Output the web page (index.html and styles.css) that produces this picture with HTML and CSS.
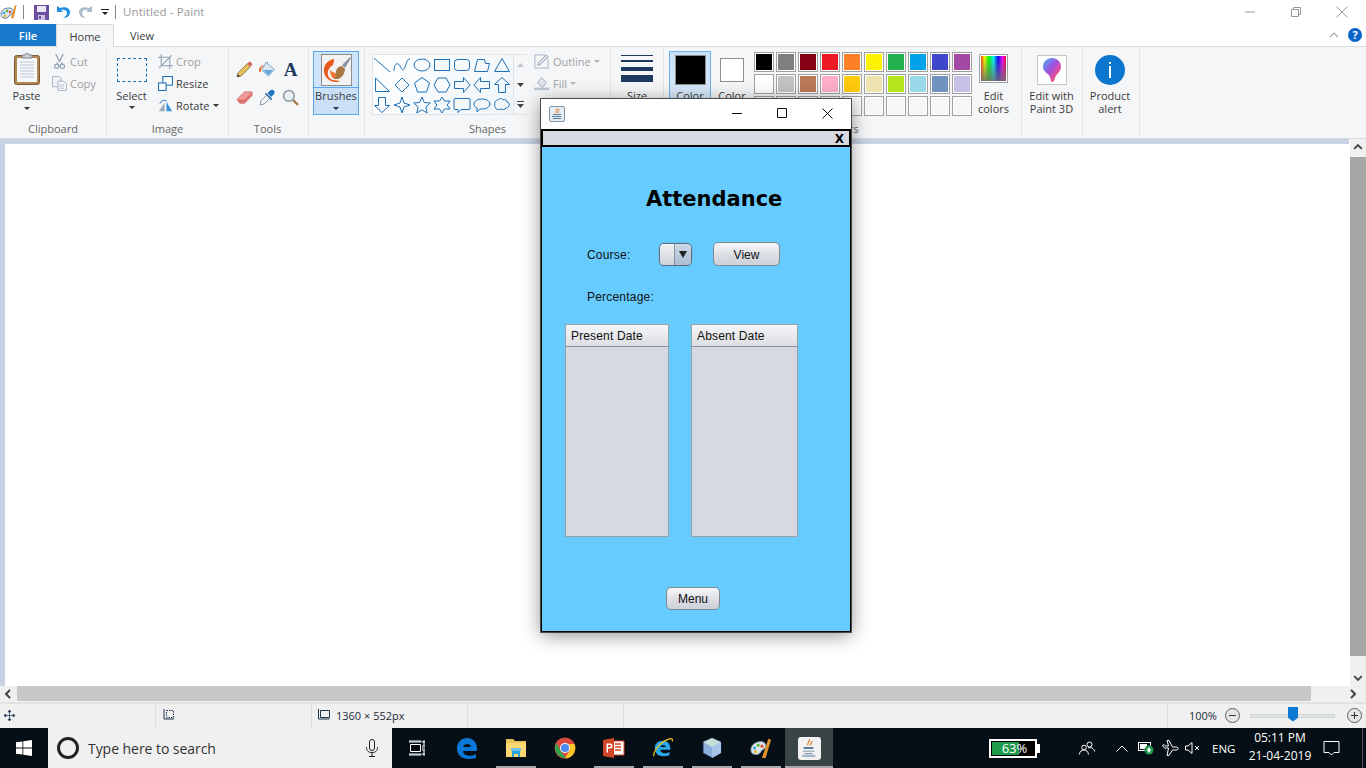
FILE: index.html
```html
<!DOCTYPE html>
<html lang="en">
<head>
<meta charset="utf-8">
<title>Untitled - Paint</title>
<link rel="stylesheet" href="styles.css">
</head>
<body>
<div class="app">
  <header class="titlebar">
    <svg class="qa-app" viewBox="0 0 17 18"><path d="M1 11c0-4 4-6 8-6 3 0 5 2 4 5-1 2-3 1-4 3-1 2-3 3-5 2-2 0-3-2-3-4z" fill="#d9e4ea" stroke="#5b7f98"/><circle cx="4" cy="10" r="1.3" fill="#3c9de0"/><circle cx="7" cy="8" r="1.3" fill="#5cb531"/><circle cx="10" cy="9" r="1.3" fill="#e0503a"/><circle cx="5" cy="13" r="1.3" fill="#e8b92c"/><path d="M11 15l4-13 1.500.5-3 13z" fill="#e2912f"/></svg>
    <span class="qa-sep qa-sep-a"></span>
    <svg class="qa-icon" viewBox="0 0 15 15"><path d="M0 0h15v15H0z" fill="#6a4fa3"/><path d="M3 1h9v6H3z" fill="#e9e6f3"/><path d="M4 10h7v5H4z" fill="#c9c3de"/><path d="M5 11h2v3H5z" fill="#6a4fa3"/></svg>
    <svg class="qa-icon" viewBox="0 0 15 15"><path d="M1 1v6h6L5 5c3-1 6 0 6 3 0 2-2 4-4 5 5 0 7-3 7-6 0-4-5-6-10-4z" fill="#1e8fe0"/></svg>
    <svg class="qa-icon" viewBox="0 0 15 15"><path d="M14 1v6H8l2-2C7 4 4 5 4 8c0 2 2 4 4 5-5 0-7-3-7-6 0-4 5-6 10-4z" fill="#a9bccb"/></svg>
    <svg class="qa-drop" viewBox="0 0 8 8"><path d="M0 1h8v1H0zM1 4h6L4 7z" fill="#222"/></svg>
    <span class="qa-sep qa-sep-b"></span>
    <span class="app-title">Untitled - Paint</span>
    <div class="caption">
      <svg viewBox="0 0 12 12"><path d="M1 6h10" stroke="#999" fill="none"/></svg>
      <svg viewBox="0 0 12 12"><path d="M1.500 3.500h7v7h-7zM3.500 3V1.500h7v7H9" stroke="#999" fill="none"/></svg>
      <svg viewBox="0 0 12 12"><path d="M.5.500l11 11M11.500.5l-11 11" stroke="#999" fill="none"/></svg>
    </div>
  </header>

  <nav class="tabs">
    <span class="tab tab-file">File</span>
    <span class="tab tab-home">Home</span>
    <span class="tab tab-view">View</span>
    <div class="tabs-right">
      <svg class="collapse" viewBox="0 0 10 6"><path d="M1 5l4-4 4 4" stroke="#aaa" fill="none" stroke-width="1.200"/></svg>
      <span class="help">?</span>
    </div>
  </nav>

  <section class="ribbon">
    <div class="group g-clip">
      <div class="group-body">
        <div class="big big-paste">
          <svg class="paste-icon" viewBox="0 0 26 32"><rect x=".5" y="2.500" width="25" height="29" rx="2" fill="#b08653" stroke="#7a5a34"/><rect x="3" y="5" width="20" height="24" fill="#f5f7fa"/><path d="M6 9h14M6 12h14M6 15h14M6 18h14M6 21h14M6 24h14" stroke="#b9c6d6"/><path d="M8 5V2h3l1-2h2l1 2h3v3z" fill="#c9ced4" stroke="#7c8288"/></svg>
          <span class="big-label">Paste</span>
          <span class="tri tri-low"></span>
        </div>
        <div class="small-col">
          <div class="small off"><svg viewBox="0 0 14 16"><path d="M3 0l4 8 4-8M5 9l-1 2M9 9l1 2" stroke="#8e9fb3" fill="none" stroke-width="1.300"/><circle cx="4" cy="13" r="2.300" fill="none" stroke="#8e9fb3" stroke-width="1.300"/><circle cx="10" cy="13" r="2.300" fill="none" stroke="#8e9fb3" stroke-width="1.300"/></svg><span>Cut</span></div>
          <div class="small off"><svg viewBox="0 0 16 16"><path d="M.5.500h7l2 2v9H.5z" fill="#eef1f5" stroke="#a4b1c2"/><path d="M6.500 5.500h6l3 3v7h-9z" fill="#f6f7f9" stroke="#a4b1c2"/><path d="M8 9h5M8 11h5M8 13h5" stroke="#bcc6d2"/></svg><span>Copy</span></div>
        </div>
      </div>
      <div class="group-label">Clipboard</div>
    </div>

    <div class="group g-image">
      <div class="group-body">
        <div class="big big-select">
          <span class="select-icon"></span>
          <span class="big-label">Select</span>
          <span class="tri"></span>
        </div>
        <div class="small-col">
          <div class="small off"><svg viewBox="0 0 14 14"><path d="M3 0v11h11M0 3h11v11M1 13L13 1" stroke="#8e9fb3" fill="none"/></svg><span>Crop</span></div>
          <div class="small"><svg viewBox="0 0 14 14"><rect x="4.500" y=".5" width="9" height="8" fill="#fff" stroke="#1f6fb5"/><rect x=".5" y="6.500" width="7" height="7" fill="#fff" stroke="#1f6fb5"/></svg><span>Resize</span></div>
          <div class="small"><svg viewBox="0 0 16 14"><path d="M1 13L7 4v9z" fill="#9fa9b5"/><path d="M9 13V3l6 10z" fill="#3a93d8"/><path d="M2 5a5 5 0 0 1 7-3" stroke="#1f6fb5" fill="none"/></svg><span>Rotate</span><span class="tri tri-inline"></span></div>
        </div>
      </div>
      <div class="group-label">Image</div>
    </div>

    <div class="group g-tools">
      <div class="group-body tools-grid">
        <svg viewBox="0 0 16 16"><path d="M1 15l1-4 8.500-8.500 3 3L5 14z" fill="#e6c25a" stroke="#6f6238" stroke-width=".7"/><path d="M10.500 2.500l1.500-1.500c.7-.5 1.200-.5 1.700 0l1.300 1.300c.5.500.5 1 0 1.700l-1.500 1.500z" fill="#d9665c"/><path d="M1 15l.6-2.600 2 2z" fill="#333"/></svg>
        <svg viewBox="0 0 18 16"><path d="M7 2V.5h2V2l7.500 6L10 15 3 8.500z" fill="#dbe9f4" stroke="#5b8fb8" stroke-width=".8"/><path d="M4.500 8.500h10L10 14z" fill="#5fa6dd"/><path d="M0 9c0-3 2-5 6-5.500L3 6c-1 1-1 3-1 5-1 0-2-1-2-2z" fill="#e8621e"/></svg>
        <span class="tool-a">A</span>
        <svg viewBox="0 0 18 14"><path d="M1 9l8-8h8v4l-8 8H4z" fill="#f09a9a" stroke="#bd6c6c" stroke-width=".7"/><path d="M9 9l8-8v4l-8 8zM1 9h8v4H4z" fill="#dc7373"/></svg>
        <svg viewBox="0 0 16 16"><path d="M1 15l1-4 5.500-5.500 3 3L5 14z" fill="#f4f6f8" stroke="#7c8a96" stroke-width=".8"/><path d="M6.500 3.500l6 6-1 1-6-6z" fill="#2a6fae"/><path d="M8 4l2.500-2.500c1-1 2.500-1 3.500 0s1 2.500 0 3.500L11.500 7.500z" fill="#1f74c0"/></svg>
        <svg viewBox="0 0 16 16"><circle cx="6.500" cy="6.500" r="5" fill="#e8f1f8" stroke="#8a959e" stroke-width="1.400"/><path d="M10.500 10.500l4.500 4.500" stroke="#a5794a" stroke-width="2.200"/></svg>
      </div>
      <div class="group-label">Tools</div>
    </div>

    <div class="group g-brush">
      <div class="brush-btn">
        <div class="brush-top">
          <svg viewBox="0 0 31 32"><rect x=".5" y=".5" width="30" height="31" fill="#f2f2f2" stroke="#8d8d8d"/><path d="M13 5C7 6 2 11 3 18c1 6 6 10 12 10 2 0 3 0 4-1l-7-1c-4-1-6-5-5-9 1-3 3-5 5-6 0-1 1-2 1-6z" fill="#e8591c"/><path d="M9 16c2 2 4 3 7 3l-1 6c-3 0-6-3-6-9z" fill="#f07a35"/><path d="M15 18c0-3 3-6 6-6l3 3c0 4-3 9-7 10-2 0-4 0-5-1 3 0 3-3 3-6z" fill="#a8773f"/><path d="M21 11L29 3l1 1-6 10z" fill="#8a97a5"/></svg>
        </div>
        <span class="big-label">Brushes</span>
        <span class="tri"></span>
      </div>
    </div>

    <div class="group g-shapes">
      <div class="group-body shapes-body">
        <div class="gallery">
          <div class="shape-grid">
            <svg viewBox="0 0 18 18"><path d="M1 2l16 14"/></svg>
            <svg viewBox="0 0 18 18"><path d="M1 15c0-8 4-9 6-5s3 6 5 1 2-8 5-8"/></svg>
            <svg viewBox="0 0 18 18"><ellipse cx="9" cy="9" rx="8" ry="6"/></svg>
            <svg viewBox="0 0 18 18"><rect x="1.500" y="3.500" width="15" height="11"/></svg>
            <svg viewBox="0 0 18 18"><rect x="1.500" y="3.500" width="15" height="11" rx="3"/></svg>
            <svg viewBox="0 0 18 18"><path d="M1.500 15.500l3-12h7l1 4h4l-2 8z"/></svg>
            <svg viewBox="0 0 18 18"><path d="M9 2.500l7.500 13h-15z"/></svg>
            <svg viewBox="0 0 18 18"><path d="M2.500 2v13.500h14z"/></svg>
            <svg viewBox="0 0 18 18"><path d="M9 2l7 7-7 7-7-7z"/></svg>
            <svg viewBox="0 0 18 18"><path d="M9 1.500l7.500 5.500-3 9h-9l-3-9z"/></svg>
            <svg viewBox="0 0 18 18"><path d="M5 2h8l4 7-4 7H5L1 9z"/></svg>
            <svg viewBox="0 0 18 18"><path d="M1.500 5.500h9v-4L17 9l-6.500 7.500v-4h-9z"/></svg>
            <svg viewBox="0 0 18 18"><path d="M16.500 5.500h-9v-4L1 9l6.500 7.500v-4h9z"/></svg>
            <svg viewBox="0 0 18 18"><path d="M5.500 16.500v-8h-4L9 1.500l7.500 7h-4v8z"/></svg>
            <svg viewBox="0 0 18 18"><path d="M5.500 1.500v8h-4L9 16.500l7.500-7h-4v-8z"/></svg>
            <svg viewBox="0 0 18 18"><path d="M9 1l2 6 6 2-6 2-2 6-2-6-6-2 6-2z"/></svg>
            <svg viewBox="0 0 18 18"><path d="M9 1l2.300 5.500 6 .5-4.500 4 1.400 6L9 13.800 3.800 17l1.400-6L.7 7l6-.5z"/></svg>
            <svg viewBox="0 0 18 18"><path d="M9 1l2.500 4H17l-2.800 4 2.800 4h-5.500L9 17l-2.500-4H1l2.800-4L1 5h5.500z"/></svg>
            <svg viewBox="0 0 18 18"><path d="M2 2.500h14a1 1 0 0 1 1 1v9a1 1 0 0 1-1 1H8l-3 3v-3H2a1 1 0 0 1-1-1v-9a1 1 0 0 1 1-1z"/></svg>
            <svg viewBox="0 0 18 18"><path d="M1 8c0-3 4-5 8-5s8 2 8 5-4 5-8 5H7l-3 3v-4C2 11 1 10 1 8z"/></svg>
            <svg viewBox="0 0 18 18"><path d="M2 8c-1-2 1-4 3-4 1-2 4-2 5 0 2-1 4 0 4 2 2 0 3 3 2 4-1 2-2 2-3 2-1 2-4 2-5 1-2 1-5 1-5-1-1 0-2-2-1-4z"/></svg>
          </div>
          <div class="gallery-scroll">
            <svg viewBox="0 0 13 20"><path d="M3 12l3.500-4 3.500 4z" fill="#c3c8ce"/></svg>
            <svg viewBox="0 0 13 20"><path d="M3 8l3.500 4 3.500-4z" fill="#444"/></svg>
            <svg viewBox="0 0 13 20"><path d="M3 6h7v1H3zM3 9l3.500 4 3.500-4z" fill="#444"/></svg>
          </div>
        </div>
        <div class="small-col small-col-shape">
          <div class="small off"><svg viewBox="0 0 16 16"><path d="M1 1h11M1 1v14h14V5" stroke="#a4b1c2" fill="none"/><path d="M4 12l1-3 8-8 2 2-8 8z" fill="#dfe5ec" stroke="#8e9fb3"/></svg><span>Outline</span><span class="tri tri-inline tri-off"></span></div>
          <div class="small off"><svg viewBox="0 0 18 16"><path d="M9 1l6 6-5 6-6-6z" fill="#dfe5ec" stroke="#8e9fb3"/><path d="M0 13h18v3H0z" fill="#b9c4d1"/></svg><span>Fill</span><span class="tri tri-inline tri-off"></span></div>
        </div>
      </div>
      <div class="group-label">Shapes</div>
    </div>

    <div class="group g-size">
      <div class="size-icon"><i class="l1"></i><i class="l2"></i><i class="l3"></i><i class="l4"></i></div>
      <span class="big-label">Size</span>
    </div>

    <div class="group g-colors">
      <div class="group-body colors-body">
        <div class="color-btn active">
          <span class="chip chip-1"></span>
          <span class="big-label">Color<br>1</span>
        </div>
        <div class="color-btn">
          <span class="chip chip-2"></span>
          <span class="big-label">Color<br>2</span>
        </div>
        <div class="palette">
          <span class="sw s01"></span><span class="sw s02"></span><span class="sw s03"></span><span class="sw s04"></span><span class="sw s05"></span><span class="sw s06"></span><span class="sw s07"></span><span class="sw s08"></span><span class="sw s09"></span><span class="sw s10"></span>
          <span class="sw s11"></span><span class="sw s12"></span><span class="sw s13"></span><span class="sw s14"></span><span class="sw s15"></span><span class="sw s16"></span><span class="sw s17"></span><span class="sw s18"></span><span class="sw s19"></span><span class="sw s20"></span>
          <span class="sw"></span><span class="sw"></span><span class="sw"></span><span class="sw"></span><span class="sw"></span><span class="sw"></span><span class="sw"></span><span class="sw"></span><span class="sw"></span><span class="sw"></span>
        </div>
        <div class="edit-col">
          <span class="rainbow"></span>
          <span class="big-label">Edit<br>colors</span>
        </div>
      </div>
      <div class="group-label">Colors</div>
    </div>

    <div class="group g-p3d">
      <span class="p3d-box"><svg viewBox="0 0 20 26"><defs><linearGradient id="p3" x1="0" y1="0" x2="1" y2="1"><stop offset="0" stop-color="#3fb6f2"/><stop offset=".45" stop-color="#a24fe0"/><stop offset=".75" stop-color="#f0508a"/><stop offset="1" stop-color="#f7a11a"/></linearGradient></defs><path d="M10 1c5 0 9 3.500 9 9 0 5-5 7-6 11-.5 3-2 4-3 4-1.500 0-1-4-3-7-2-2-6-4-6-8C1 4.500 5 1 10 1z" fill="url(#p3)"/></svg></span>
      <span class="big-label">Edit with<br>Paint 3D</span>
    </div>

    <div class="group g-alert">
      <span class="alert-circle"><i class="alert-dot"></i><i class="alert-bar"></i></span>
      <span class="big-label">Product<br>alert</span>
    </div>
  </section>

  <main class="workspace">
    <div class="canvas-wrap">
      <div class="canvas-area"><div class="canvas"></div></div>
      <div class="vscroll">
        <svg class="arrow" viewBox="0 0 17 16"><path d="M4.500 10l4-4 4 4" stroke="#444" stroke-width="2" fill="none"/></svg>
        <div class="vthumb"></div>
        <svg class="arrow" viewBox="0 0 17 16"><path d="M4.500 6l4 4 4-4" stroke="#444" stroke-width="2" fill="none"/></svg>
      </div>
    </div>
    <div class="hscroll">
      <svg class="arrow-h" viewBox="0 0 17 16"><path d="M10 4l-4 4 4 4" stroke="#444" stroke-width="2" fill="none"/></svg>
      <div class="hthumb"></div>
      <svg class="arrow-h" viewBox="0 0 17 16"><path d="M7 4l4 4-4 4" stroke="#444" stroke-width="2" fill="none"/></svg>
    </div>
  </main>

  <footer class="status">
    <div class="st st1"><svg viewBox="0 0 12 12"><path d="M6 0v12M0 6h12M6 0L4.500 2h3zM6 12l-1.500-2h3zM0 6l2-1.500v3zM12 6l-2-1.500v3z" stroke="#1d3550" fill="#1d3550" stroke-width=".8"/></svg></div>
    <div class="st st2"><svg viewBox="0 0 14 13"><path d="M3 0v10h10" stroke="#1d3550" fill="none"/><path d="M5.500 1.500h7v7h-7z" stroke="#1d3550" fill="none" stroke-dasharray="1.500 1"/></svg></div>
    <div class="st st3"><svg viewBox="0 0 14 13"><path d="M1.500 0v10h11" stroke="#1d3550" fill="none"/><path d="M3.500 1.500h9v7h-9z" stroke="#1d3550" fill="none"/></svg><span>1360 × 552px</span></div>
    <div class="st st4"></div>
    <div class="st st5"></div>
    <div class="st st6">
      <span class="zoom-val">100%</span>
      <span class="zoom-btn"><i></i></span>
      <span class="slider"><i class="thumb"></i></span>
      <span class="zoom-btn plus"><i></i></span>
    </div>
  </footer>

  <footer class="taskbar">
    <div class="start"><svg viewBox="0 0 16 16"><path d="M0 2.300l6.500-.9v6.200H0zM7.300 1.300L16 0v7.600H7.300zM0 8.400h6.500v6.200L0 13.700zM7.300 8.400H16V16l-8.700-1.200z" fill="#fff"/></svg></div>
    <div class="search">
      <span class="cortana"></span>
      <span class="search-text">Type here to search</span>
      <svg class="mic" viewBox="0 0 12 18"><rect x="3.500" y=".5" width="5" height="11" rx="2.500" fill="none" stroke="#222"/><path d="M.5 8c0 4 2 5.500 5.500 5.500S11.500 12 11.500 8M6 13.500V17M3 17.500h6" fill="none" stroke="#222"/></svg>
    </div>
    <div class="apps">
      <span class="app-slot slot-task"><svg viewBox="0 0 16 16"><path d="M0 1h12v1H0zM0 14h12v1H0zM1.500 4.500h10v7h-10zM14 1h2v2h-2zM14 5h2v6h-2zM14 13h2v2h-2z" fill="none" stroke="#fff"/></svg></span>
      <span class="app-slot"><svg viewBox="0 0 22 22"><path d="M1 11C1 5 6 1 11 1c6 0 10 4 10 11v2H7c0 5 8 6 13 3v4c-7 2-14 1-17-3-1-2-2-4-2-7zm6-1h8c0-4-7-4-8 0z" fill="#0a78d7"/></svg></span>
      <span class="app-slot on"><svg viewBox="0 0 22 20"><path d="M1 1h7l2 2h11v3H1z" fill="#e8c457"/><path d="M1 5h20v14H1z" fill="#fbd872"/><path d="M7 13h8v6h-2v-3H9v3H7z" fill="#2ba3e0"/><path d="M6 10h10v3H6z" fill="#6fc2ec"/></svg></span>
      <span class="app-slot"><svg viewBox="0 0 22 22"><circle cx="11" cy="11" r="10.500" fill="#dd4b3e"/><path d="M2 6l6 10 4 5a10.500 10.500 0 0 1-10-15z" fill="#2fa34f"/><path d="M20.500 7A10.500 10.500 0 0 1 11 21.500L16 13l-1-6z" fill="#f9c923"/><circle cx="11" cy="11" r="5" fill="#fff"/><circle cx="11" cy="11" r="4" fill="#4a8af0"/></svg></span>
      <span class="app-slot on"><svg viewBox="0 0 22 20"><path d="M9 3h12v14H9z" fill="#fff" stroke="#d24726"/><path d="M12 6h6M12 9h6M12 12h6" stroke="#d24726" stroke-width="1.400"/><path d="M0 2l11-2v20L0 18z" fill="#d24726"/><path d="M3.500 5.500h3.500a2.500 2.500 0 0 1 0 5H5v4H3.500zM5 7v2h2a1 1 0 0 0 0-2z" fill="#fff"/></svg></span>
      <span class="app-slot on"><svg viewBox="0 0 24 24"><path d="M3 12c0-5 4-8 9-8 5 0 8 3 8 9v1H9c0 4 6 5 10 2v4c-6 2-12 1-14-2-1-2-2-4-2-6zm6-1h6c0-3-5-3-6 0z" fill="#2aa8e8"/><path d="M2 21C1 16 9 5 19 2c3-1 4 1 3 3" stroke="#f0c419" fill="none" stroke-width="1.300"/></svg></span>
      <span class="app-slot on"><svg viewBox="0 0 22 22"><path d="M11 1l9 4v11l-9 5-9-5V5z" fill="#8db1dc" stroke="#1f2a55"/><path d="M11 1l9 4-9 5-9-5z" fill="#c7ded8"/><path d="M11 10l9-5v11l-9 5z" fill="#a8c4e8"/></svg></span>
      <span class="app-slot on"><svg viewBox="0 0 24 24"><path d="M1 14c0-6 6-9 11-9 4 0 6 3 5 6-1 3-4 2-5 5-1 2-4 4-7 3-3 0-4-3-4-5z" fill="#dbe6ec" stroke="#6f8fa5"/><circle cx="5" cy="12" r="1.700" fill="#3c9de0"/><circle cx="9" cy="9" r="1.700" fill="#5cb531"/><circle cx="13" cy="10" r="1.700" fill="#e0503a"/><circle cx="6" cy="16" r="1.700" fill="#e8b92c"/><path d="M13 23L20 2l3 1-6 20z" fill="#e2912f"/></svg></span>
      <span class="app-slot active on"><span class="java-tile"><svg viewBox="0 0 18 20"><path d="M9 0c2 3-3 4-1 7M12 2c1 2-2 3-1 5" stroke="#e2761b" fill="none" stroke-width="1.300"/><path d="M3 9h11v2H3zM2 13h13v1H2zM4 16h9v1H4zM1 18.500h15v1H1z" fill="#5b7f9e"/></svg></span></span>
    </div>
    <div class="tray">
      <div class="battery"><span class="bat-fill"></span><span class="bat-text">63%</span></div>
      <svg class="t-people" viewBox="0 0 16 14"><circle cx="10.500" cy="3.500" r="2.500" fill="none" stroke="#fff"/><circle cx="5" cy="6.500" r="2.300" fill="none" stroke="#fff"/><path d="M.5 13.500c0-3 2-4.500 4.500-4.500s4 1.500 4.500 4.500M9 7c3-1 6 0 6.500 3.500" fill="none" stroke="#fff"/></svg>
      <svg class="t-chev" viewBox="0 0 12 7"><path d="M.5 6.500L6 1l5.500 5.500" fill="none" stroke="#fff"/></svg>
      <svg class="t-power" viewBox="0 0 16 14"><rect x=".5" y="1.500" width="12" height="8" fill="none" stroke="#fff"/><path d="M2 3h7v5H2z" fill="#fff"/><circle cx="11" cy="9" r="4.500" fill="#1e9a4a"/><path d="M11 6l2 3-2 3-2-3z" fill="#fff"/></svg>
      <svg class="t-plane" viewBox="0 0 17 16"><path d="M.5 5.500l2 2.500h4L5 15.500h2L10.500 10H14c3 0 3-3 0-3h-3.500L7 .5H5L6.500 6h-3L2 4.500z" fill="none" stroke="#fff"/></svg>
      <svg class="t-vol" viewBox="0 0 15 12"><path d="M.5 4h2.500L7 .5v11L3 8H.5z" fill="none" stroke="#fff"/><path d="M10 4l4 4M14 4l-4 4" stroke="#fff"/></svg>
      <span class="t-lang">ENG</span>
      <div class="clock"><span>05:11 PM</span><span>21-04-2019</span></div>
      <svg class="t-notif" viewBox="0 0 16 15"><path d="M.5.500h15v11h-5L8 14l-2.500-2.500h-5z" fill="none" stroke="#fff"/></svg>
      <span class="t-edge"></span>
    </div>
  </footer>

  <div class="jwin">
    <div class="jtitle">
      <span class="jicon"><svg viewBox="0 0 14 14"><path d="M7 1c1 2-2 2.500-1 5M9 2c.5 1.500-1.500 2-1 4" stroke="#e2761b" fill="none"/><path d="M3 7h8v1H3zM2 9h9v1H2zM3 11h8v1H3z" fill="#5b7f9e"/></svg></span>
      <div class="jcaption">
        <svg viewBox="0 0 11 11"><path d="M0 5.500h10" stroke="#111" fill="none"/></svg>
        <svg viewBox="0 0 11 11"><path d="M.5.500h9v9h-9z" stroke="#111" fill="none"/></svg>
        <svg viewBox="0 0 11 11"><path d="M.5.500l10 10M10.500.5l-10 10" stroke="#111" fill="none"/></svg>
      </div>
    </div>
    <div class="jframe">
      <div class="jbar"><span class="jx">X</span></div>
      <div class="jcontent">
        <h1 class="jhead">Attendance</h1>
        <div class="jrow">
          <span class="jlabel jlabel-course">Course:</span>
          <span class="combo"><i class="combo-field"></i><i class="combo-arrow"></i></span>
          <span class="jbtn jbtn-view">View</span>
        </div>
        <div class="jlabel jlabel-pct">Percentage:</div>
        <div class="jtables">
          <div class="jtable jt1"><div class="jth">Present Date</div></div>
          <div class="jtable jt2"><div class="jth">Absent Date</div></div>
        </div>
        <div class="jbtn jbtn-menu">Menu</div>
      </div>
    </div>
  </div>
</div>
</body>
</html>
```
FILE: styles.css
```css
* { box-sizing: border-box; }
html, body { margin: 0; padding: 0; }
body { width: 1366px; height: 768px; overflow: hidden; font-family: "Open Sans", "Noto Sans", sans-serif; font-size: 11px; color: #3c3c3c; }
svg { display: block; flex: none; }
i { display: block; font-style: normal; }

.app { position: relative; width: 1366px; height: 768px; display: flex; flex-direction: column; background: #fff; }

/* title bar */
.titlebar { height: 24px; display: flex; align-items: center; background: #fff; flex: none; }
.qa-app { width: 17px; height: 18px; }
.qa-sep { width: 1px; height: 14px; background: #888; }
.qa-sep-a { margin: 0 10px 0 6px; }
.qa-sep-b { margin: 0 7px 0 6px; }
.qa-icon { width: 15px; height: 15px; margin-right: 7px; }
.qa-drop { width: 8px; height: 8px; margin-left: 1px; }
.app-title { font-size: 11.500px; line-height: 14px; margin-top: -1px; color: #9a9a9a; letter-spacing: .1px; }
.caption { margin-left: auto; display: flex; margin-right: 18px; gap: 34px; }
.caption svg { width: 12px; height: 12px; }

/* tabs */
.tabs { height: 23px; display: flex; align-items: stretch; background: #fff; border-bottom: 1px solid #dadbdc; flex: none; }
.tab { display: flex; align-items: center; justify-content: center; font-size: 11px; color: #3b3b3b; }
.tab-file { width: 56px; background: #1979ca; color: #fff; font-weight: 600; }
.tab-home { width: 58px; background: #f5f6f7; border: 1px solid #dadbdc; border-bottom: 0; margin-bottom: -1px; }
.tab-view { width: 56px; }
.tabs-right { margin-left: auto; display: flex; align-items: center; gap: 9px; padding-right: 4px; }
.collapse { width: 10px; height: 6px; }
.help { width: 14px; height: 14px; border-radius: 50%; background: #0a63c9; color: #fff; font-weight: 700; font-size: 11px; line-height: 14px; text-align: center; }

/* ribbon */
.ribbon { height: 92px; background: #f5f6f7; border-bottom: 1px solid #dadbdc; display: flex; align-items: stretch; padding-top: 2px; padding-bottom: 2px; flex: none; }
.group { position: relative; display: flex; flex-direction: column; border-right: 1px solid #e2e3e5; flex: none; }
.group-body { display: flex; height: 72px; }
.group-label { text-align: center; font-size: 11px; line-height: 14px; color: #666; margin-top: 1px; }
.big { display: flex; flex-direction: column; align-items: center; }
.big-label { display: block; font-size: 11px; line-height: 13px; color: #3c3c3c; text-align: center; }
.tri { display: block; width: 0; height: 0; border-left: 3px solid transparent; border-right: 3px solid transparent; border-top: 3px solid #333; margin-top: 4px; }
.tri-low { margin-top: 5px; }
.tri-inline { margin: 0 0 0 3px; }
.tri-off { border-top-color: #b4b4b4; }

.g-clip { width: 107px; }
.big-paste { width: 53px; }
.paste-icon { width: 26px; height: 32px; margin: 4px 0 4px; }
.small-col { display: flex; flex-direction: column; margin-top: 1px; }
.g-clip .small-col { margin-left: -1px; }
.small { height: 22px; display: flex; align-items: center; color: #3c3c3c; font-size: 11px; }
.small svg { width: 15px; height: 15px; margin-right: 3px; }
.small.off { color: #a0a0a0; }

.g-image { width: 122px; }
.big-select { width: 49px; }
.select-icon { display: block; width: 30px; height: 24px; border: 1px dashed #1f6fb5; margin: 9px 0 7px 0; }
.g-image .small-col { margin-left: 2px; }

.g-tools { width: 80px; padding-right: 2px; }
.tools-grid { display: grid; grid-template-columns: repeat(3, 23px); grid-auto-rows: 28px; align-content: start; padding: 6px 0 0 4px; align-items: center; justify-items: center; }
.tools-grid svg { width: 17px; height: 17px; }
.tool-a { font-family: "Liberation Serif", serif; font-weight: 700; font-size: 19px; line-height: 17px; color: #1d3a5f; }

.g-brush { width: 56px; padding: 0 5px 0 4px; }
.brush-btn { width: 46px; height: 64px; margin-top: 2px; background: #c9e0f7; border: 1px solid #5aa5e8; display: flex; flex-direction: column; align-items: center; }
.brush-top { width: 44px; height: 36px; background: #cfe4f9; border-bottom: 1px solid #5aa5e8; display: flex; justify-content: center; align-items: center; margin-bottom: 1px; }
.brush-top svg { width: 31px; height: 32px; }
.brush-btn .tri { margin-top: 5px; }

.g-shapes { width: 246px; }
.shapes-body { padding-left: 7px; }
.gallery { width: 155px; height: 61px; margin-top: 5px; display: flex; border: 1px solid #e2e3e5; background: #fff; }
.shape-grid { width: 140px; display: grid; grid-template-columns: repeat(7, 20px); grid-auto-rows: 20px; background: linear-gradient(135deg, #fff, #eef5fa); }
.shape-grid svg { width: 18px; height: 18px; margin: 1px 0 0 0; fill: none; stroke: #1f6fb5; stroke-width: 1; }
.gallery-scroll { flex: 1; background: #f5f6f7; border-left: 1px solid #e2e3e5; }
.gallery-scroll svg { width: 13px; height: 20px; }
.small-col-shape { margin-left: 7px; }
.small-col-shape .small svg { margin-right: 4px; }
.g-size { width: 53px; align-items: center; }
.size-icon { width: 32px; height: 28px; margin-top: 6px; margin-bottom: 5px; display: flex; flex-direction: column; }
.size-icon i { background: #1f3a5f; }
.l1 { height: 1px; }
.l2 { height: 2px; margin-top: 4px; }
.l3 { height: 4px; margin-top: 5px; }
.l4 { height: 7px; margin-top: 4px; }
.g-size .big-label { margin-top: 1px; }

.g-colors { width: 358px; }
.colors-body { padding-left: 5px; }
.color-btn { width: 42px; height: 66px; margin-top: 2px; display: flex; flex-direction: column; align-items: center; border: 1px solid transparent; }
.color-btn.active { background: linear-gradient(#c9e0f7, #deedfb); border-color: #6eb0ea; }
.chip { display: block; }
.chip-1 { width: 31px; height: 30px; margin-top: 3px; margin-bottom: 4px; background: #000; border: 1px solid #8d8d8d; }
.chip-2 { width: 24px; height: 24px; margin-top: 6px; margin-bottom: 7px; background: #fff; border: 1px solid #8d8d8d; }
.palette { display: grid; grid-template-columns: repeat(10, 20px); grid-auto-rows: 20px; gap: 2px; margin: 3px 0 0 1px; height: 64px; }
.sw { display: block; border: 1px solid #a0a0a0; box-shadow: inset 0 0 0 1px #fff; background: #f5f6f7; }
.s01 { background: #000; } .s02 { background: #7f7f7f; } .s03 { background: #880015; } .s04 { background: #ed1c24; } .s05 { background: #ff7f27; }
.s06 { background: #fff200; } .s07 { background: #22b14c; } .s08 { background: #00a2e8; } .s09 { background: #3f48cc; } .s10 { background: #a349a4; }
.s11 { background: #fff; } .s12 { background: #c3c3c3; } .s13 { background: #b97a57; } .s14 { background: #ffaec9; } .s15 { background: #ffc90e; }
.s16 { background: #efe4b0; } .s17 { background: #b5e61d; } .s18 { background: #99d9ea; } .s19 { background: #7092be; } .s20 { background: #c8bfe7; }
.edit-col { width: 43px; display: flex; flex-direction: column; align-items: center; }
.rainbow { display: block; width: 29px; height: 29px; margin: 5px 0 6px; border: 1px solid #a0a0a0; box-shadow: inset 0 0 0 1px #fff; background: linear-gradient(rgba(255,255,255,0), rgba(110,110,110,.9)), linear-gradient(90deg, #f00, #ff0, #0f0, #0ff, #00f, #f0f, #f00); }

.g-p3d { width: 61px; align-items: center; padding-right: 1px; }
.p3d-box { display: flex; align-items: center; justify-content: center; width: 30px; height: 30px; margin: 6px 0 4px; background: #fff; border: 1px solid #c4c4c4; }
.p3d-box svg { width: 20px; height: 26px; }
.g-alert { width: 57px; align-items: center; padding-right: 2px; }
.alert-circle { position: relative; display: block; width: 30px; height: 30px; margin: 6px 0 4px; border-radius: 50%; background: #0d77cf; }
.alert-dot { position: absolute; left: 14px; top: 7px; width: 2px; height: 2px; background: #fff; }
.alert-bar { position: absolute; left: 14px; top: 11px; width: 2px; height: 12px; background: #fff; }

/* workspace */
.workspace { flex: 1; display: flex; flex-direction: column; min-height: 0; }
.canvas-wrap { flex: 1; display: flex; min-height: 0; }
.canvas-area { flex: 1; background: #c8d2e3; padding: 5px 0 0 5px; }
.canvas { width: 100%; height: 100%; background: #fff; }
.vscroll { width: 17px; background: #f0f0f0; display: flex; flex-direction: column; justify-content: space-between; border-left: 1px solid #fff; }
.vthumb { flex: 1; margin: 2px 0 14px; background: #a6a6a6; }
.arrow { width: 16px; height: 16px; }
.hscroll { height: 16px; display: flex; background: #f0f0f0; flex: none; }
.arrow-h { width: 17px; height: 16px; }
.hthumb { width: 1294px; background: #c8c8c8; height: 15px; }
.hscroll .arrow-h:last-child { margin-left: auto; margin-right: 5px; }

/* status */
.status { height: 26px; background: #f0f0f0; border-top: 2px solid #e2e2e2; display: flex; flex: none; }
.st { display: flex; align-items: center; border-right: 1px solid #dcdcdc; height: 23px; color: #1d2b3a; font-size: 11px; }
.st1 { width: 156px; padding-left: 4px; } .st1 svg { width: 11px; height: 11px; }
.st2 { width: 156px; padding-left: 5px; } .st2 svg { width: 14px; height: 13px; }
.st3 { width: 156px; padding-left: 5px; gap: 5px; } .st3 svg { width: 14px; height: 13px; }
.st4 { width: 156px; }
.st5 { width: 544px; }
.st6 { flex: 1; border-right: 0; padding-left: 21px; }
.zoom-val { width: 29px; }
.zoom-btn { position: relative; display: block; width: 15px; height: 15px; margin-left: 7px; border: 1px solid #5f5f5f; border-radius: 50%; background: #e6e6e6; }
.zoom-btn i { position: absolute; left: 3px; top: 6px; width: 7px; height: 1px; background: #333; }
.zoom-btn.plus { margin-left: 12px; }
.zoom-btn.plus i::after { content: ""; position: absolute; left: 3px; top: -3px; width: 1px; height: 7px; background: #333; }
.slider { position: relative; display: block; width: 85px; height: 4px; margin-left: 10px; background: #dfe4e4; border: 1px solid #d0d6d6; }
.thumb { position: absolute; left: 37px; top: -8px; width: 10px; height: 15px; background: #0b78d4; clip-path: polygon(0 0, 100% 0, 100% 75%, 50% 100%, 0 75%); }

/* taskbar */
.taskbar { height: 40px; background: #060f15; display: flex; flex: none; color: #fff; }
.start { width: 48px; display: flex; align-items: center; justify-content: center; }
.start svg { width: 16px; height: 16px; }
.search { width: 344px; background: #f0f0f0; display: flex; align-items: center; padding-left: 9px; }
.cortana { display: block; width: 22px; height: 22px; border: 3px solid #222; border-radius: 50%; margin-right: 9px; }
.search-text { font-size: 14px; color: #333; letter-spacing: -.05px; }
.mic { width: 12px; height: 18px; margin-left: auto; margin-right: 14px; }
.apps { display: flex; padding-left: 1px; }
.app-slot { width: 49px; height: 40px; display: flex; align-items: center; justify-content: center; position: relative; }
.app-slot svg { width: 22px; height: 22px; }
.slot-task { padding-right: 2px; }
.app-slot.slot-task svg { width: 16px; height: 16px; }
.app-slot.on::after { content: ""; position: absolute; left: 5px; right: 4px; bottom: 0; height: 2px; background: #a8a8a8; }
.app-slot.active { background: #3a4447; width: 48px; }
.app-slot.active::after { left: 0; right: 0; }
.java-tile { display: flex; align-items: center; justify-content: center; width: 23px; height: 23px; border-radius: 3px; background: #f2f2f2; }
.app-slot .java-tile svg { width: 16px; height: 18px; }
.tray { flex: 1; display: flex; align-items: center; position: relative; padding-left: 156px; }
.battery { position: relative; width: 48px; height: 19px; border: 2px solid #fff; background: #000; margin-right: 42px; }
.battery::after { content: ""; position: absolute; right: -5px; top: 3px; width: 3px; height: 9px; background: #fff; }
.bat-fill { position: absolute; left: 1px; top: 1px; bottom: 1px; width: 27px; background: #1e9a4a; }
.bat-text { position: absolute; left: 0; top: 0; width: 47px; text-align: center; font-size: 13px; line-height: 15px; color: #fff; }
.t-people { width: 16px; height: 14px; }
.t-chev { width: 12px; height: 7px; margin-left: 21px; }
.t-power { width: 16px; height: 14px; margin-left: 10px; }
.t-plane { width: 17px; height: 16px; margin-left: 8px; }
.t-vol { width: 15px; height: 12px; margin-left: 6px; }
.t-lang { font-size: 11.500px; margin-left: 12px; width: 24px; }
.clock { width: 66px; margin-left: 11px; display: flex; flex-direction: column; align-items: center; font-size: 12px; line-height: 18px; margin-top: -3px; }
.t-notif { width: 17px; height: 15px; margin-left: 10px; }
.t-edge { position: absolute; right: 3px; top: 0; bottom: 0; width: 1px; background: #555; }

/* java window */
.jwin { position: absolute; left: 541px; top: 99px; width: 310px; height: 533px; background: #fff; box-shadow: 0 3px 18px rgba(0,0,0,.45), 0 0 0 1px #5a5a5a; display: flex; flex-direction: column; }
.jtitle { height: 30px; display: flex; align-items: center; flex: none; padding-left: 8px; }
.jicon { display: flex; align-items: center; justify-content: center; width: 16px; height: 16px; background: #e8edf2; border: 1px solid #7d94a8; border-radius: 2px; }
.jicon svg { width: 14px; height: 14px; }
.jcaption { margin-left: auto; display: flex; gap: 34px; margin-right: 18px; margin-top: -1px; }
.jcaption svg { width: 11px; height: 11px; }
.jframe { flex: 1; border: 1px solid #000; display: flex; flex-direction: column; min-height: 0; }
.jbar { height: 17px; background: #d6d9e0; border: 1px solid #000; border-bottom-width: 2px; display: flex; justify-content: flex-end; align-items: center; padding-right: 5px; flex: none; }
.jx { font-family: "DejaVu Sans", sans-serif; font-weight: 700; font-size: 12px; line-height: 15px; margin-top: 3px; color: #000; }
.jcontent { flex: 1; background: #66ccff; display: flex; flex-direction: column; font-family: "Liberation Sans", Arial, sans-serif; font-size: 12px; letter-spacing: .2px; color: #111; }
.jhead { margin: 37px 0 0 104px; font-family: "DejaVu Sans", sans-serif; font-weight: 700; font-size: 21px; line-height: 30px; color: #000; letter-spacing: 0; }
.jrow { display: flex; align-items: center; height: 24px; margin-top: 28px; padding-left: 45px; }
.jlabel-course { width: 72px; padding-top: 1px; }
.jlabel { line-height: 14px; }
.jlabel-pct { margin: 24px 0 0 45px; }
.combo { display: flex; width: 33px; height: 23px; border: 1px solid #5f6b80; border-radius: 5px; overflow: hidden; box-shadow: 0 0 1px #5f6b80; }
.combo-field { width: 15px; background: linear-gradient(#f0f1f4, #cfd3da); border-right: 1px solid #8a93a3; }
.combo-arrow { flex: 1; position: relative; background: linear-gradient(#cdd9e6, #a9bdd1); }
.combo-arrow::after { content: ""; position: absolute; left: 4px; top: 7px; border-left: 4px solid transparent; border-right: 4px solid transparent; border-top: 7px solid #222; }
.jbtn { display: flex; align-items: center; justify-content: center; border: 1px solid #7f8794; border-radius: 5px; background: linear-gradient(#f6f7f9, #d9dce2 60%, #cdd1d8); color: #111; }
.jbtn-view { width: 67px; height: 24px; margin-left: 21px; padding-top: 1px; letter-spacing: 0; }
.jtables { display: flex; margin: 20px 0 0 23px; }
.jtable { height: 213px; background: #d6d9e0; border: 1px solid #9aa0aa; }
.jt1 { width: 104px; }
.jt2 { width: 107px; margin-left: 22px; }
.jth { height: 22px; padding-left: 5px; line-height: 22px; background: linear-gradient(#f4f5f7, #dcdee3); border-bottom: 1px solid #8a8f9a; letter-spacing: .15px; }
.jbtn-menu { width: 54px; height: 23px; margin: 50px 0 0 124px; letter-spacing: 0; }
```
